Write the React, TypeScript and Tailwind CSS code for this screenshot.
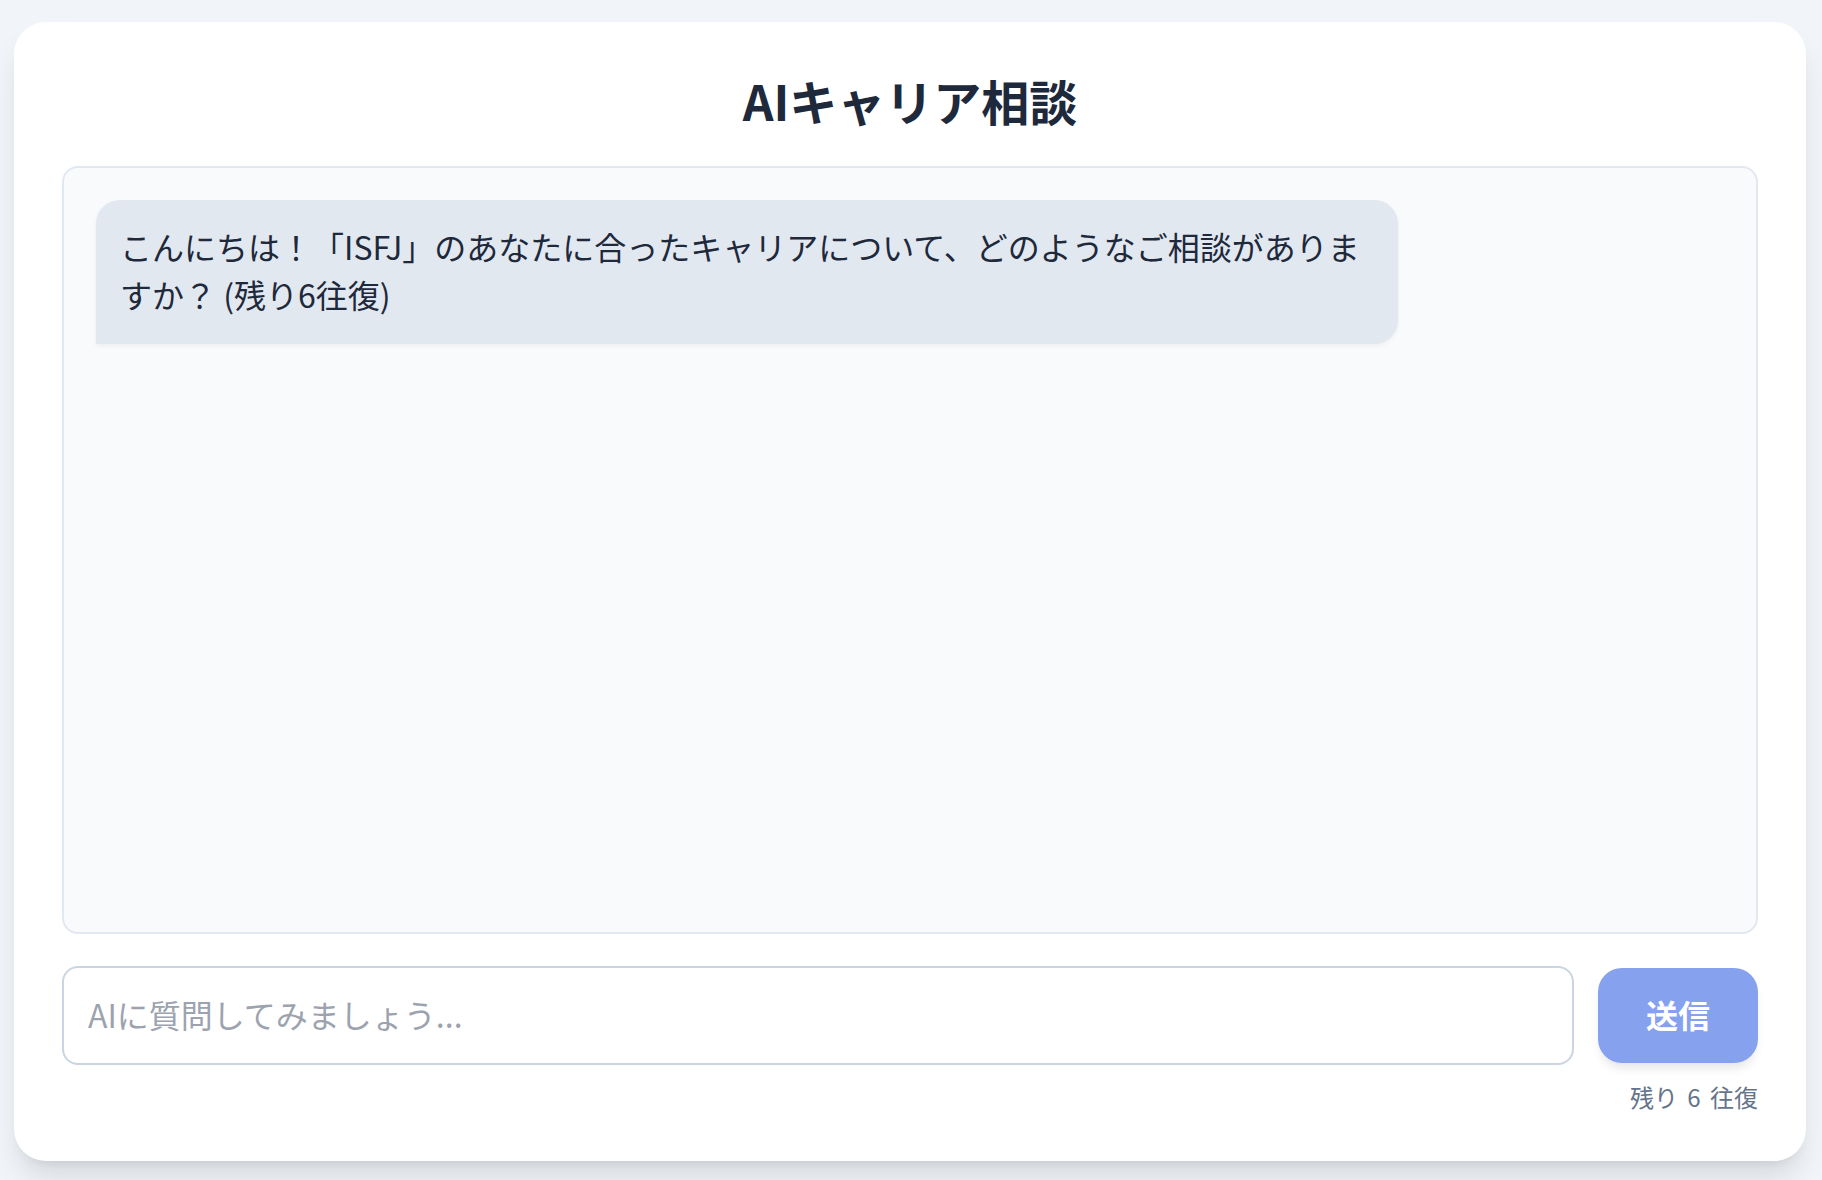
import React from "react";

export default function App() {
  return (
    <div
      className="min-h-screen w-full bg-[#f1f5f9] pl-[14px] pr-[16px] pt-[22px] pb-[18px]"
      style={{ fontFamily: '"Noto Sans CJK JP", "Noto Sans", sans-serif' }}
    >
      <div className="flex flex-col rounded-[32px] bg-white p-[48px] shadow-[0_20px_30px_-6px_rgba(0,0,0,0.12),0_8px_12px_-8px_rgba(0,0,0,0.1)]">
        <h1 className="mb-[36px] text-center text-[48px] font-bold leading-[60px] text-[#1e293b]">
          AIキャリア相談
        </h1>
        <div className="h-[768px] rounded-[16px] border-2 border-[#e2e8f0] bg-[#f8fafc] p-[32px]">
          <div className="flex justify-start">
            <div className="max-w-[80%] rounded-[24px] rounded-bl-none bg-[#e2e8f0] px-[24px] pt-[22px] pb-[26px] text-[32px] leading-[48px] text-[#1e293b] shadow-[0_2px_4px_rgba(0,0,0,0.05)]">
              こんにちは！「ISFJ」のあなたに合ったキャリアについて、どのようなご相談がありますか？ (残り6往復)
            </div>
          </div>
        </div>
        <div className="mt-[32px] flex items-center gap-[24px]">
          <input
            type="text"
            placeholder="AIに質問してみましょう..."
            className="h-[99px] flex-1 rounded-[16px] border-2 border-[#cbd5e1] bg-white px-[24px] pb-[4px] text-[32px] text-[#1e293b] outline-none placeholder:text-[#9ca3af]"
          />
          <button className="h-[95px] w-[160px] rounded-[24px] bg-[#86a1ee] pb-[4px] text-[32px] font-bold text-white shadow-[0_8px_12px_-4px_rgba(0,0,0,0.12)]">
            送信
          </button>
        </div>
        <div className="mt-[16px] text-right text-[24px] leading-[32px] text-[#64748b] [word-spacing:4px]">
          残り 6 往復
        </div>
      </div>
    </div>
  );
}
